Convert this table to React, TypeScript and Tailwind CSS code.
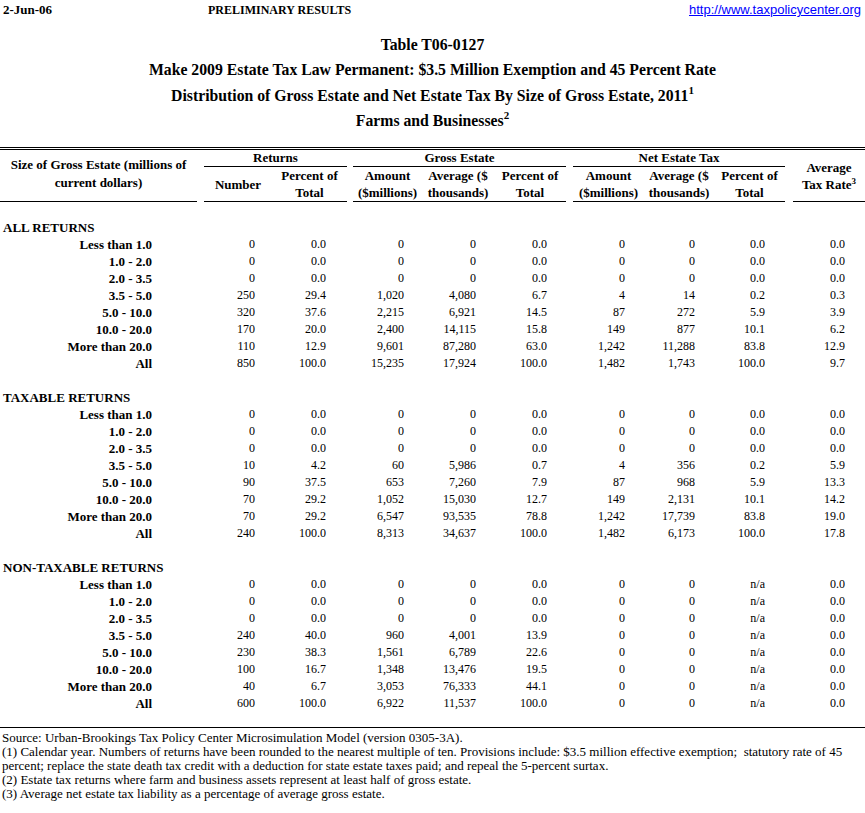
import React from "react";

type Row = [string, string[]];

const z = (last: string): string[] => ["0", "0.0", "0", "0", "0.0", "0", "0", last, "0.0"];

const sections: { title: string; rows: Row[] }[] = [
  {
    title: "ALL RETURNS",
    rows: [
      ["Less than 1.0", z("0.0")],
      ["1.0 - 2.0", z("0.0")],
      ["2.0 - 3.5", z("0.0")],
      ["3.5 - 5.0", ["250", "29.4", "1,020", "4,080", "6.7", "4", "14", "0.2", "0.3"]],
      ["5.0 - 10.0", ["320", "37.6", "2,215", "6,921", "14.5", "87", "272", "5.9", "3.9"]],
      ["10.0 - 20.0", ["170", "20.0", "2,400", "14,115", "15.8", "149", "877", "10.1", "6.2"]],
      ["More than 20.0", ["110", "12.9", "9,601", "87,280", "63.0", "1,242", "11,288", "83.8", "12.9"]],
      ["All", ["850", "100.0", "15,235", "17,924", "100.0", "1,482", "1,743", "100.0", "9.7"]],
    ],
  },
  {
    title: "TAXABLE RETURNS",
    rows: [
      ["Less than 1.0", z("0.0")],
      ["1.0 - 2.0", z("0.0")],
      ["2.0 - 3.5", z("0.0")],
      ["3.5 - 5.0", ["10", "4.2", "60", "5,986", "0.7", "4", "356", "0.2", "5.9"]],
      ["5.0 - 10.0", ["90", "37.5", "653", "7,260", "7.9", "87", "968", "5.9", "13.3"]],
      ["10.0 - 20.0", ["70", "29.2", "1,052", "15,030", "12.7", "149", "2,131", "10.1", "14.2"]],
      ["More than 20.0", ["70", "29.2", "6,547", "93,535", "78.8", "1,242", "17,739", "83.8", "19.0"]],
      ["All", ["240", "100.0", "8,313", "34,637", "100.0", "1,482", "6,173", "100.0", "17.8"]],
    ],
  },
  {
    title: "NON-TAXABLE RETURNS",
    rows: [
      ["Less than 1.0", z("n/a")],
      ["1.0 - 2.0", z("n/a")],
      ["2.0 - 3.5", z("n/a")],
      ["3.5 - 5.0", ["240", "40.0", "960", "4,001", "13.9", "0", "0", "n/a", "0.0"]],
      ["5.0 - 10.0", ["230", "38.3", "1,561", "6,789", "22.6", "0", "0", "n/a", "0.0"]],
      ["10.0 - 20.0", ["100", "16.7", "1,348", "13,476", "19.5", "0", "0", "n/a", "0.0"]],
      ["More than 20.0", ["40", "6.7", "3,053", "76,333", "44.1", "0", "0", "n/a", "0.0"]],
      ["All", ["600", "100.0", "6,922", "11,537", "100.0", "0", "0", "n/a", "0.0"]],
    ],
  },
];

const GRID =
  "grid grid-cols-[197px_7px_68px_75px_6px_69px_72px_72px_7px_71px_70px_71px_8px_72px]";

const pads = [
  "pr-[17px]",
  "pr-[21px]",
  "pr-[18px]",
  "pr-[18px]",
  "pr-[19px]",
  "pr-[19px]",
  "pr-[19px]",
  "pr-[20px]",
  "pr-[20px]",
];

function V({ v, i }: { v: string; i: number }) {
  return <div className={`text-right text-[12px] ${pads[i]}`}>{v}</div>;
}

function DataRow({ label, vals }: { label: string; vals: string[] }) {
  return (
    <div className={`${GRID} h-[17px] items-center leading-[17px]`}>
      <div className="text-right pr-[45px] font-bold text-[13px]">{label}</div>
      <div />
      <V v={vals[0]} i={0} />
      <V v={vals[1]} i={1} />
      <div />
      <V v={vals[2]} i={2} />
      <V v={vals[3]} i={3} />
      <V v={vals[4]} i={4} />
      <div />
      <V v={vals[5]} i={5} />
      <V v={vals[6]} i={6} />
      <V v={vals[7]} i={7} />
      <div />
      <V v={vals[8]} i={8} />
    </div>
  );
}

function Sub({ a, b }: { a: string; b?: string }) {
  return (
    <div className="border-b border-black flex flex-col items-center justify-center text-center leading-[17px] font-bold text-[13px] whitespace-nowrap">
      <div>{a}</div>
      {b ? <div>{b}</div> : null}
    </div>
  );
}

export default function App() {
  return (
    <div className="w-[865px] bg-white text-black font-['Liberation_Serif','Times_New_Roman',serif]">
      {/* top strip */}
      <div className="h-[20px] flex items-center relative">
        <div className="pl-[3px] w-[208px] font-bold text-[13px]">2-Jun-06</div>
        <div className="font-bold text-[12px]">PRELIMINARY RESULTS</div>
        <div className="ml-auto pr-[4px] font-['Liberation_Sans',Arial,sans-serif] text-[13px] text-[#0000ff] underline">
          http://www.taxpolicycenter.org
        </div>
      </div>

      {/* titles */}
      <div className="pt-[12px] flex flex-col items-center font-bold text-[15.75px]">
        <div className="h-[25px] leading-[25px]">Table T06-0127</div>
        <div className="h-[26px] leading-[26px]">
          Make 2009 Estate Tax Law Permanent: $3.5 Million Exemption and 45 Percent Rate
        </div>
        <div className="h-[25px] leading-[25px]">
          Distribution of Gross Estate and Net Estate Tax By Size of Gross Estate, 2011
          <sup className="text-[11px] relative -top-[7px]">1</sup>
        </div>
        <div className="h-[26px] leading-[26px]">
          Farms and Businesses<sup className="text-[11px] relative -top-[7px]">2</sup>
        </div>
      </div>

      {/* double rule */}
      <div className="mt-[13px] border-t-[3px] border-double border-black" />

      {/* header */}
      <div className={`${GRID} grid-rows-[17px_35px]`}>
        <div className="row-span-2 border-b border-black flex flex-col items-center justify-center pb-[4px] font-bold text-[13px] leading-[18px] text-center">
          <div>Size of Gross Estate (millions of</div>
          <div>current dollars)</div>
        </div>
        <div className="row-span-2" />
        <div className="col-span-2 border-b border-black text-center font-bold text-[13px] leading-[16px]">
          Returns
        </div>
        <div className="row-span-2" />
        <div className="col-span-3 border-b border-black text-center font-bold text-[13px] leading-[16px]">
          Gross Estate
        </div>
        <div className="row-span-2" />
        <div className="col-span-3 border-b border-black text-center font-bold text-[13px] leading-[16px]">
          Net Estate Tax
        </div>
        <div className="row-span-2" />
        <div className="row-span-2 border-b border-black flex flex-col items-center justify-center font-bold text-[13px] leading-[17px] text-center">
          <div>Average</div>
          <div>
            Tax Rate<sup className="text-[9px] relative -top-[5px]">3</sup>
          </div>
        </div>

        <Sub a="Number" />
        <Sub a="Percent of" b="Total" />
        <Sub a="Amount" b="($millions)" />
        <Sub a="Average ($" b="thousands)" />
        <Sub a="Percent of" b="Total" />
        <Sub a="Amount" b="($millions)" />
        <Sub a="Average ($" b="thousands)" />
        <Sub a="Percent of" b="Total" />
      </div>

      {/* body */}
      <div className="flex flex-col">
        {sections.map((s) => (
          <div key={s.title} className="flex flex-col">
            <div className="h-[17px]" />
            <div className="h-[17px] leading-[17px] pl-[3px] font-bold text-[13px]">{s.title}</div>
            {s.rows.map(([label, vals]) => (
              <DataRow key={s.title + label} label={label} vals={vals} />
            ))}
          </div>
        ))}
      </div>

      {/* footer rule */}
      <div className="mt-[15px] border-t border-black" />

      <div className="pt-[3px] pl-[2px] text-[13px] leading-[14px] whitespace-pre">
        <div>Source: Urban-Brookings Tax Policy Center Microsimulation Model (version 0305-3A).</div>
        <div>
          (1) Calendar year. Numbers of returns have been rounded to the nearest multiple of ten. Provisions include: $3.5 million effective exemption;  statutory rate of 45
        </div>
        <div>
          percent; replace the state death tax credit with a deduction for state estate taxes paid; and repeal the 5-percent surtax.
        </div>
        <div>(2) Estate tax returns where farm and business assets represent at least half of gross estate.</div>
        <div>(3) Average net estate tax liability as a percentage of average gross estate.</div>
      </div>
    </div>
  );
}
